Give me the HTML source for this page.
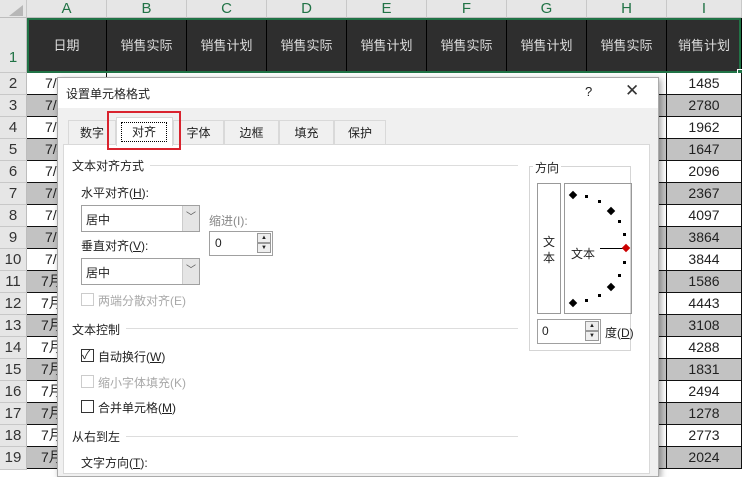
<!DOCTYPE html>
<html><head><meta charset="utf-8"><style>
*{margin:0;padding:0;box-sizing:border-box}
body{width:742px;height:470px;overflow:hidden;background:#fff;position:relative;font-family:"Liberation Sans","Microsoft YaHei","Noto Sans CJK SC",sans-serif;font-size:12px;color:#222}
.a{position:absolute}
.ch{top:0;height:18px;background:#e6e6e6;border-right:1px solid #c8c8c8;border-bottom:1px solid #bdbdbd;text-align:center;color:#217346;font-size:15px;line-height:18px}
.rh{left:0;width:27px;background:#e6e6e6;border-bottom:1px solid #c8c8c8;border-right:1px solid #bdbdbd;text-align:center;font-size:15px;line-height:22px;color:#333}
.hd{top:18px;height:55px;background:#2e2e2e;border-right:1px solid #000;color:#ddd;font-size:13px;text-align:center;line-height:55px}
.c{height:22px;border-bottom:1px solid #111;border-right:1px solid #111;text-align:center;font-size:14px;line-height:21px;overflow:hidden;white-space:nowrap}
.d{text-align:left;padding-left:18px}
.g{background:#c2c2c2}
.w{background:#fff}
.lbl{font-size:12px;color:#222}
.sec{font-size:12px;color:#222}
.line{height:1px;background:#ddd}
.box{border:1px solid #a0a0a0;background:#fff}
.cb{width:13px;height:13px;border:1px solid #333;background:#fff}
.dis{color:#a8a8a8}
.dot{width:3px;height:3px;background:#000}
.dia{width:6px;height:6px;background:#000;transform:rotate(45deg)}
u{text-decoration:underline}
</style></head><body>
<div class="a ch" style="left:0;width:27px;background:#e6e6e6"></div>
<div class="a" style="left:9px;top:5px;width:0;height:0;border-left:14px solid transparent;border-bottom:11px solid #b7b7b7"></div>
<div class="a ch" style="left:27px;width:80px">A</div>
<div class="a ch" style="left:107px;width:80px">B</div>
<div class="a ch" style="left:187px;width:80px">C</div>
<div class="a ch" style="left:267px;width:80px">D</div>
<div class="a ch" style="left:347px;width:80px">E</div>
<div class="a ch" style="left:427px;width:80px">F</div>
<div class="a ch" style="left:507px;width:80px">G</div>
<div class="a ch" style="left:587px;width:80px">H</div>
<div class="a ch" style="left:667px;width:75px">I</div>
<div class="a rh" style="top:18px;height:55px;line-height:80px;color:#217346">1</div>
<div class="a hd" style="left:27px;width:80px">日期</div>
<div class="a hd" style="left:107px;width:80px">销售实际</div>
<div class="a hd" style="left:187px;width:80px">销售计划</div>
<div class="a hd" style="left:267px;width:80px">销售实际</div>
<div class="a hd" style="left:347px;width:80px">销售计划</div>
<div class="a hd" style="left:427px;width:80px">销售实际</div>
<div class="a hd" style="left:507px;width:80px">销售计划</div>
<div class="a hd" style="left:587px;width:80px">销售实际</div>
<div class="a hd" style="left:667px;width:75px">销售计划</div>
<div class="a" style="left:27px;top:18px;width:714px;height:55px;border:2px solid #217346"></div>
<div class="a" style="left:737px;top:69px;width:6px;height:6px;background:#217346;border:1px solid #fff"></div>
<div class="a rh" style="top:73px;height:22px">2</div><div class="a c w d" style="left:27px;top:73px;width:80px">7/1</div><div class="a c w" style="left:587px;top:73px;width:80px"></div><div class="a c w" style="left:667px;top:73px;width:75px">1485</div>
<div class="a rh" style="top:95px;height:22px">3</div><div class="a c g d" style="left:27px;top:95px;width:80px">7/2</div><div class="a c g" style="left:587px;top:95px;width:80px"></div><div class="a c g" style="left:667px;top:95px;width:75px">2780</div>
<div class="a rh" style="top:117px;height:22px">4</div><div class="a c w d" style="left:27px;top:117px;width:80px">7/3</div><div class="a c w" style="left:587px;top:117px;width:80px"></div><div class="a c w" style="left:667px;top:117px;width:75px">1962</div>
<div class="a rh" style="top:139px;height:22px">5</div><div class="a c g d" style="left:27px;top:139px;width:80px">7/4</div><div class="a c g" style="left:587px;top:139px;width:80px"></div><div class="a c g" style="left:667px;top:139px;width:75px">1647</div>
<div class="a rh" style="top:161px;height:22px">6</div><div class="a c w d" style="left:27px;top:161px;width:80px">7/5</div><div class="a c w" style="left:587px;top:161px;width:80px"></div><div class="a c w" style="left:667px;top:161px;width:75px">2096</div>
<div class="a rh" style="top:183px;height:22px">7</div><div class="a c g d" style="left:27px;top:183px;width:80px">7/6</div><div class="a c g" style="left:587px;top:183px;width:80px"></div><div class="a c g" style="left:667px;top:183px;width:75px">2367</div>
<div class="a rh" style="top:205px;height:22px">8</div><div class="a c w d" style="left:27px;top:205px;width:80px">7/7</div><div class="a c w" style="left:587px;top:205px;width:80px"></div><div class="a c w" style="left:667px;top:205px;width:75px">4097</div>
<div class="a rh" style="top:227px;height:22px">9</div><div class="a c g d" style="left:27px;top:227px;width:80px">7/8</div><div class="a c g" style="left:587px;top:227px;width:80px"></div><div class="a c g" style="left:667px;top:227px;width:75px">3864</div>
<div class="a rh" style="top:249px;height:22px">10</div><div class="a c w d" style="left:27px;top:249px;width:80px">7/9</div><div class="a c w" style="left:587px;top:249px;width:80px"></div><div class="a c w" style="left:667px;top:249px;width:75px">3844</div>
<div class="a rh" style="top:271px;height:22px">11</div><div class="a c g d" style="left:27px;top:271px;width:80px;padding-left:14px">7月10日</div><div class="a c g" style="left:587px;top:271px;width:80px"></div><div class="a c g" style="left:667px;top:271px;width:75px">1586</div>
<div class="a rh" style="top:293px;height:22px">12</div><div class="a c w d" style="left:27px;top:293px;width:80px;padding-left:14px">7月11日</div><div class="a c w" style="left:587px;top:293px;width:80px"></div><div class="a c w" style="left:667px;top:293px;width:75px">4443</div>
<div class="a rh" style="top:315px;height:22px">13</div><div class="a c g d" style="left:27px;top:315px;width:80px;padding-left:14px">7月12日</div><div class="a c g" style="left:587px;top:315px;width:80px"></div><div class="a c g" style="left:667px;top:315px;width:75px">3108</div>
<div class="a rh" style="top:337px;height:22px">14</div><div class="a c w d" style="left:27px;top:337px;width:80px;padding-left:14px">7月13日</div><div class="a c w" style="left:587px;top:337px;width:80px"></div><div class="a c w" style="left:667px;top:337px;width:75px">4288</div>
<div class="a rh" style="top:359px;height:22px">15</div><div class="a c g d" style="left:27px;top:359px;width:80px;padding-left:14px">7月14日</div><div class="a c g" style="left:587px;top:359px;width:80px"></div><div class="a c g" style="left:667px;top:359px;width:75px">1831</div>
<div class="a rh" style="top:381px;height:22px">16</div><div class="a c w d" style="left:27px;top:381px;width:80px;padding-left:14px">7月15日</div><div class="a c w" style="left:587px;top:381px;width:80px"></div><div class="a c w" style="left:667px;top:381px;width:75px">2494</div>
<div class="a rh" style="top:403px;height:22px">17</div><div class="a c g d" style="left:27px;top:403px;width:80px;padding-left:14px">7月16日</div><div class="a c g" style="left:587px;top:403px;width:80px"></div><div class="a c g" style="left:667px;top:403px;width:75px">1278</div>
<div class="a rh" style="top:425px;height:22px">18</div><div class="a c w d" style="left:27px;top:425px;width:80px;padding-left:14px">7月17日</div><div class="a c w" style="left:587px;top:425px;width:80px"></div><div class="a c w" style="left:667px;top:425px;width:75px">2773</div>
<div class="a rh" style="top:447px;height:23px">19</div><div class="a c g d" style="left:27px;top:447px;width:80px;padding-left:14px">7月18日</div><div class="a c g" style="left:587px;top:447px;width:80px"></div><div class="a c g" style="left:667px;top:447px;width:75px">2024</div>
<!-- dialog -->
<div class="a" style="left:57px;top:77px;width:602px;height:400px;background:#f0f0f0;border:1px solid #aaa;box-shadow:2px 2px 6px rgba(0,0,0,.35)"></div>
<div class="a" style="left:58px;top:78px;width:600px;height:30px;background:#fff"></div>
<div class="a" style="left:66px;top:85px;font-size:12px">设置单元格格式</div>
<div class="a" style="left:585px;top:84px;font-size:13px">?</div>
<div class="a" style="left:625px;top:81px;font-size:17px;color:#333">✕</div>
<div class="a" style="left:63px;top:144px;width:587px;height:330px;background:#fff;border:1px solid #d9d9d9"></div>
<div class="a" style="left:68px;top:120px;width:48px;height:25px;border:1px solid #d9d9d9;border-bottom:none;text-align:center;line-height:24px">数字</div>
<div class="a" style="left:116px;top:117px;width:57px;height:29px;background:#fff;border:1px solid #d9d9d9;border-bottom:none"></div>
<div class="a" style="left:121px;top:122px;width:46px;height:20px;border:1px dotted #000;text-align:center;line-height:18px">对齐</div>
<div class="a" style="left:173px;top:120px;width:51px;height:25px;border:1px solid #d9d9d9;border-bottom:none;text-align:center;line-height:24px">字体</div>
<div class="a" style="left:224px;top:120px;width:55px;height:25px;border:1px solid #d9d9d9;border-bottom:none;text-align:center;line-height:24px">边框</div>
<div class="a" style="left:279px;top:120px;width:55px;height:25px;border:1px solid #d9d9d9;border-bottom:none;text-align:center;line-height:24px">填充</div>
<div class="a" style="left:334px;top:120px;width:52px;height:25px;border:1px solid #d9d9d9;border-bottom:none;text-align:center;line-height:24px">保护</div>
<div class="a" style="left:107px;top:111px;width:74px;height:39px;border:2px solid #d9232e"></div>
<div class="a sec" style="left:72px;top:157px">文本对齐方式</div>
<div class="a line" style="left:150px;top:165px;width:368px"></div>
<div class="a lbl" style="left:81px;top:184px">水平对齐(<u>H</u>):</div>
<div class="a box" style="left:81px;top:205px;width:119px;height:27px"></div>
<div class="a" style="left:86px;top:211px">居中</div>
<div class="a" style="left:182px;top:206px;width:17px;height:25px;background:#e5e5e5;border-left:1px solid #ccc;text-align:center;line-height:24px;color:#555;font-size:10px">﹀</div>
<div class="a lbl dis" style="left:209px;top:212px;color:#888">缩进(I):</div>
<div class="a box" style="left:209px;top:231px;width:64px;height:25px"></div>
<div class="a" style="left:215px;top:236px">0</div>
<div class="a" style="left:257px;top:233px;width:14px;height:10px;border:1px solid #999;background:#eee;font-size:6px;text-align:center;line-height:8px">▲</div>
<div class="a" style="left:257px;top:243px;width:14px;height:10px;border:1px solid #999;background:#eee;font-size:6px;text-align:center;line-height:8px">▼</div>
<div class="a lbl" style="left:81px;top:237px">垂直对齐(<u>V</u>):</div>
<div class="a box" style="left:81px;top:258px;width:119px;height:27px"></div>
<div class="a" style="left:86px;top:264px">居中</div>
<div class="a" style="left:182px;top:259px;width:17px;height:25px;background:#e5e5e5;border-left:1px solid #ccc;text-align:center;line-height:24px;color:#555;font-size:10px">﹀</div>
<div class="a cb" style="left:81px;top:293px;border-color:#ccc"></div>
<div class="a dis" style="left:98px;top:292px">两端分散对齐(E)</div>
<div class="a sec" style="left:72px;top:321px">文本控制</div>
<div class="a line" style="left:126px;top:328px;width:392px"></div>
<div class="a cb" style="left:81px;top:349px"></div>
<div class="a" style="left:82px;top:346px;font-size:12px">✓</div>
<div class="a" style="left:98px;top:348px">自动换行(<u>W</u>)</div>
<div class="a cb" style="left:81px;top:375px;border-color:#ccc"></div>
<div class="a dis" style="left:98px;top:374px">缩小字体填充(K)</div>
<div class="a cb" style="left:81px;top:400px"></div>
<div class="a" style="left:98px;top:399px">合并单元格(<u>M</u>)</div>
<div class="a sec" style="left:72px;top:428px">从右到左</div>
<div class="a line" style="left:126px;top:436px;width:392px"></div>
<div class="a" style="left:81px;top:454px">文字方向(<u>T</u>):</div>
<div class="a" style="left:529px;top:166px;width:102px;height:185px;border:1px solid #d5d5d5"></div>
<div class="a" style="left:533px;top:159px;background:#fff;padding:0 2px">方向</div>
<div class="a" style="left:537px;top:183px;width:24px;height:131px;border:1px solid #999;text-align:center;padding-top:50px;line-height:16px">文<br>本</div>
<div class="a" style="left:564px;top:183px;width:68px;height:131px;border:1px solid #999"></div>
<div class="a" style="left:571px;top:245px">文本</div>
<div class="a" style="left:600px;top:248px;width:23px;height:1px;background:#000"></div>
<div class="a dia" style="left:623px;top:245px;background:#c00"></div>
<div class="a dia" style="left:570px;top:192px"></div>
<div class="a dia" style="left:608px;top:208px"></div>
<div class="a dia" style="left:608px;top:284px"></div>
<div class="a dia" style="left:570px;top:300px"></div>
<div class="a dot" style="left:585px;top:195px"></div>
<div class="a dot" style="left:598px;top:200px"></div>
<div class="a dot" style="left:618px;top:220px"></div>
<div class="a dot" style="left:623px;top:233px"></div>
<div class="a dot" style="left:623px;top:261px"></div>
<div class="a dot" style="left:618px;top:274px"></div>
<div class="a dot" style="left:598px;top:294px"></div>
<div class="a dot" style="left:585px;top:299px"></div>
<div class="a box" style="left:537px;top:319px;width:64px;height:25px"></div>
<div class="a" style="left:542px;top:324px">0</div>
<div class="a" style="left:585px;top:321px;width:14px;height:10px;border:1px solid #999;background:#eee;font-size:6px;text-align:center;line-height:8px">▲</div>
<div class="a" style="left:585px;top:331px;width:14px;height:10px;border:1px solid #999;background:#eee;font-size:6px;text-align:center;line-height:8px">▼</div>
<div class="a" style="left:605px;top:324px">度(<u>D</u>)</div>
</body></html>
